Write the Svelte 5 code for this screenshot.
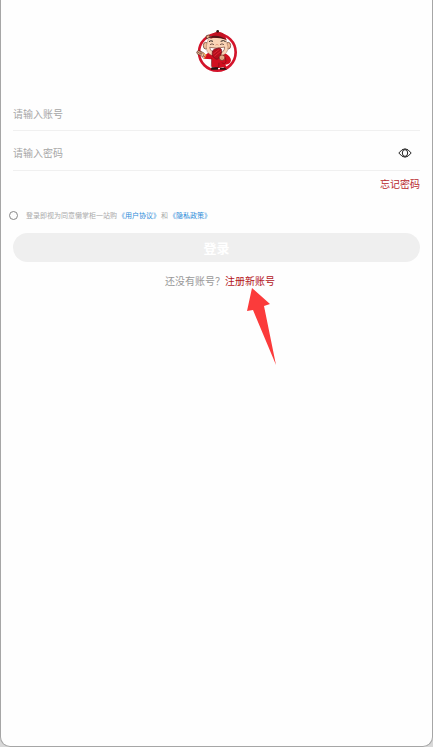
<script lang="ts">
	let account = $state('');
	let password = $state('');
	let showPassword = $state(false);
	let agreed = $state(false);

	function submit(e: Event) {
		e.preventDefault();
	}
</script>

<main class="page">
	<svg class="logo" viewBox="2 0 180 180" role="img" aria-label="懒掌柜">
		<circle cx="93" cy="91" r="55" fill="#fff" stroke="#d3142b" stroke-width="8" />
		<!-- robe and sleeves -->
		<path d="M66 92 L54 101 L51 110 L76 112 L76 135 Q92 142 112 135 L112 139 Q120 142 121 135 L117 128 Q132 128 134 115 Q133 103 119 95 Z" fill="#d20f20" />
		<path d="M76 109 L75 134 M98 122 L97 138 M117 106 L119 119 Q116 128 106 122" fill="none" stroke="#7a1016" stroke-width="2" />
		<path d="M76 136 h19 v7 h-22 z M101 137 h15 l6 6 h-21 z" fill="#28110f" />
		<!-- head -->
		<ellipse cx="58" cy="71" rx="7" ry="10" fill="#f0bd98" stroke="#5b3024" stroke-width="2" />
		<ellipse cx="126" cy="71" rx="7" ry="10" fill="#f0bd98" stroke="#5b3024" stroke-width="2" />
		<path d="M65 52 Q92 38 119 53 L125 75 Q126 94 106 101 Q91 106 76 100 Q58 92 60 72 Z" fill="#fad4b6" stroke="#70402d" stroke-width="1" />
		<path d="M68 59 Q73 54 80 58 M103 58 Q112 53 118 59" fill="none" stroke="#282020" stroke-width="3" />
		<path d="M71 68 q6 -5 12 0 M101 68 q6 -5 12 0" fill="none" stroke="#361d19" stroke-width="2" />
		<path d="M87 70 q5 -7 10 0" fill="#f3b490" stroke="#c47a58" stroke-width="1" />
		<path d="M70 76 Q92 82 115 75 Q114 94 95 94 Q73 93 70 76 Z" fill="#fff" stroke="#7a4438" stroke-width="2" />
		<!-- cap -->
		<path d="M75 46 Q77 30 95 29 Q114 30 118 46 L121 54 Q97 42 72 50 Z" fill="#c31223" />
		<path d="M68 45 Q93 34 121 53 Q96 45 66 48 Z" fill="#511416" />
		<circle cx="94" cy="28" r="4" fill="#331516" />
		<path d="M59 42 Q66 36 72 42 Q69 48 61 51 Z" fill="#e5a780" stroke="#4b2118" stroke-width="2" />
		<!-- fan and hands -->
		<path d="M87 110 L78 102 Q75 82 88 80 Q105 74 106 86 Q107 102 93 112 Z" fill="#b50e1c" stroke="#6b1018" stroke-width="2" />
		<path d="M81 96 L99 82 M84 103 L104 87" stroke="#ed3540" stroke-width="2" />
		<path d="M43 100 Q31 98 31 91 Q34 83 44 88 L54 94 L50 106 Z" fill="#f0bd98" stroke="#5a291d" stroke-width="2" />
		<path d="M33 90 L46 97 M39 86 L48 96" stroke="#4b2b22" stroke-width="2" />
		<path d="M52 94 l7 5 l-6 11" fill="none" stroke="#edac36" stroke-width="3" />
		<circle cx="107" cy="107" r="8" fill="#f3b994" stroke="#632d20" stroke-width="2" />
		<path d="M102 105 h9 M103 109 h8" stroke="#a75b42" stroke-width="1" />
	</svg>

	<form onsubmit={submit}>
		<div class="field">
			<input type="text" placeholder="请输入账号" aria-label="账号" bind:value={account} />
		</div>
		<div class="field">
			<input
				type={showPassword ? 'text' : 'password'}
				placeholder="请输入密码"
				aria-label="密码"
				bind:value={password}
			/>
			<button
				type="button"
				class="eye"
				aria-label="显示密码"
				onclick={() => (showPassword = !showPassword)}
			>
				<svg viewBox="0 0 14 10">
					<path d="M0.8 5 Q4 0.8 7 0.8 T13.2 5 Q10 9.2 7 9.2 T0.8 5 Z" />
					<ellipse cx="7" cy="5" rx="2.7" ry="3.4" />
				</svg>
			</button>
		</div>

		<a class="forgot" href="#forgot">忘记密码</a>

		<div class="agreement">
			<input id="agree" type="checkbox" bind:checked={agreed} />
			<label for="agree">登录即视为同意懒掌柜一站购</label>
			<a href="#terms">《用户协议》</a>
			<span>和</span>
			<a href="#privacy">《隐私政策》</a>
		</div>

		<button class="login" type="submit">登录</button>
	</form>

	<p class="signup">
		还没有账号？<a href="#register"
			>注册新账号<svg class="arrow" viewBox="0 0 30 78" aria-hidden="true">
				<path d="M5 0 L23 16 L17 18 L29 77 L6 22 L0 23 Z" />
			</svg></a
		>
	</p>
</main>

<style>
	:global(body) {
		background: #d8d8d8;
	}

	.page {
		box-sizing: border-box;
		min-height: 100vh;
		padding: 22px 12px;
		border: 1px solid #a6a6a6;
		border-top: none;
		border-radius: 0 0 10px 10px;
		background: #fefefe;
		color: #999;
		font-family: 'Noto Sans CJK SC', sans-serif;
		font-size: 10px;
		line-height: 16px;
	}

	.logo {
		display: block;
		width: 60px;
		height: 60px;
		margin: 0 auto 16px;
	}

	form {
		display: flex;
		flex-direction: column;
	}

	.field {
		display: flex;
		align-items: center;
		height: 32px;
		border-bottom: 1px solid #f0f0f0;
	}

	.field + .field {
		height: 33px;
		margin-top: 5px;
		padding-bottom: 1px;
	}

	.field input {
		flex: 1;
		min-width: 0;
		padding: 0;
		border: none;
		outline: none;
		background: none;
		color: #333;
		font: inherit;
	}

	.field input::placeholder {
		color: #a6a6a6;
	}

	button {
		border: none;
		font: inherit;
		cursor: pointer;
	}

	.eye {
		display: flex;
		margin-right: 8px;
		padding: 0;
		background: none;
	}

	.eye svg {
		width: 14px;
		height: 10px;
		fill: none;
		stroke: #222;
		stroke-width: 1;
	}

	a {
		text-decoration: none;
	}

	.forgot {
		align-self: flex-end;
		margin-top: 5px;
		color: #b8272c;
	}

	.agreement {
		display: flex;
		align-items: center;
		gap: 1px;
		height: 16px;
		margin: 15px 0 10px -4px;
		color: #aaa;
		font-size: 7px;
	}

	.agreement input {
		appearance: none;
		width: 9px;
		height: 9px;
		margin: 0 7px 0 0;
		border: 1px solid #888;
		border-radius: 50%;
	}

	.agreement input:checked {
		background: #b8272c;
	}

	.agreement a {
		color: #2b8ad8;
	}

	.login {
		height: 29px;
		border-radius: 15px;
		background: #efefef;
		color: #fff;
		font-size: 13px;
		font-weight: 700;
	}

	.signup {
		margin: 11px 0 0;
		padding-left: 7px;
		text-align: center;
	}

	.signup a {
		position: relative;
		color: #b3141b;
	}

	.arrow {
		position: absolute;
		top: 15px;
		left: 22px;
		width: 30px;
		height: 78px;
		fill: #fb3b3b;
	}
</style>
